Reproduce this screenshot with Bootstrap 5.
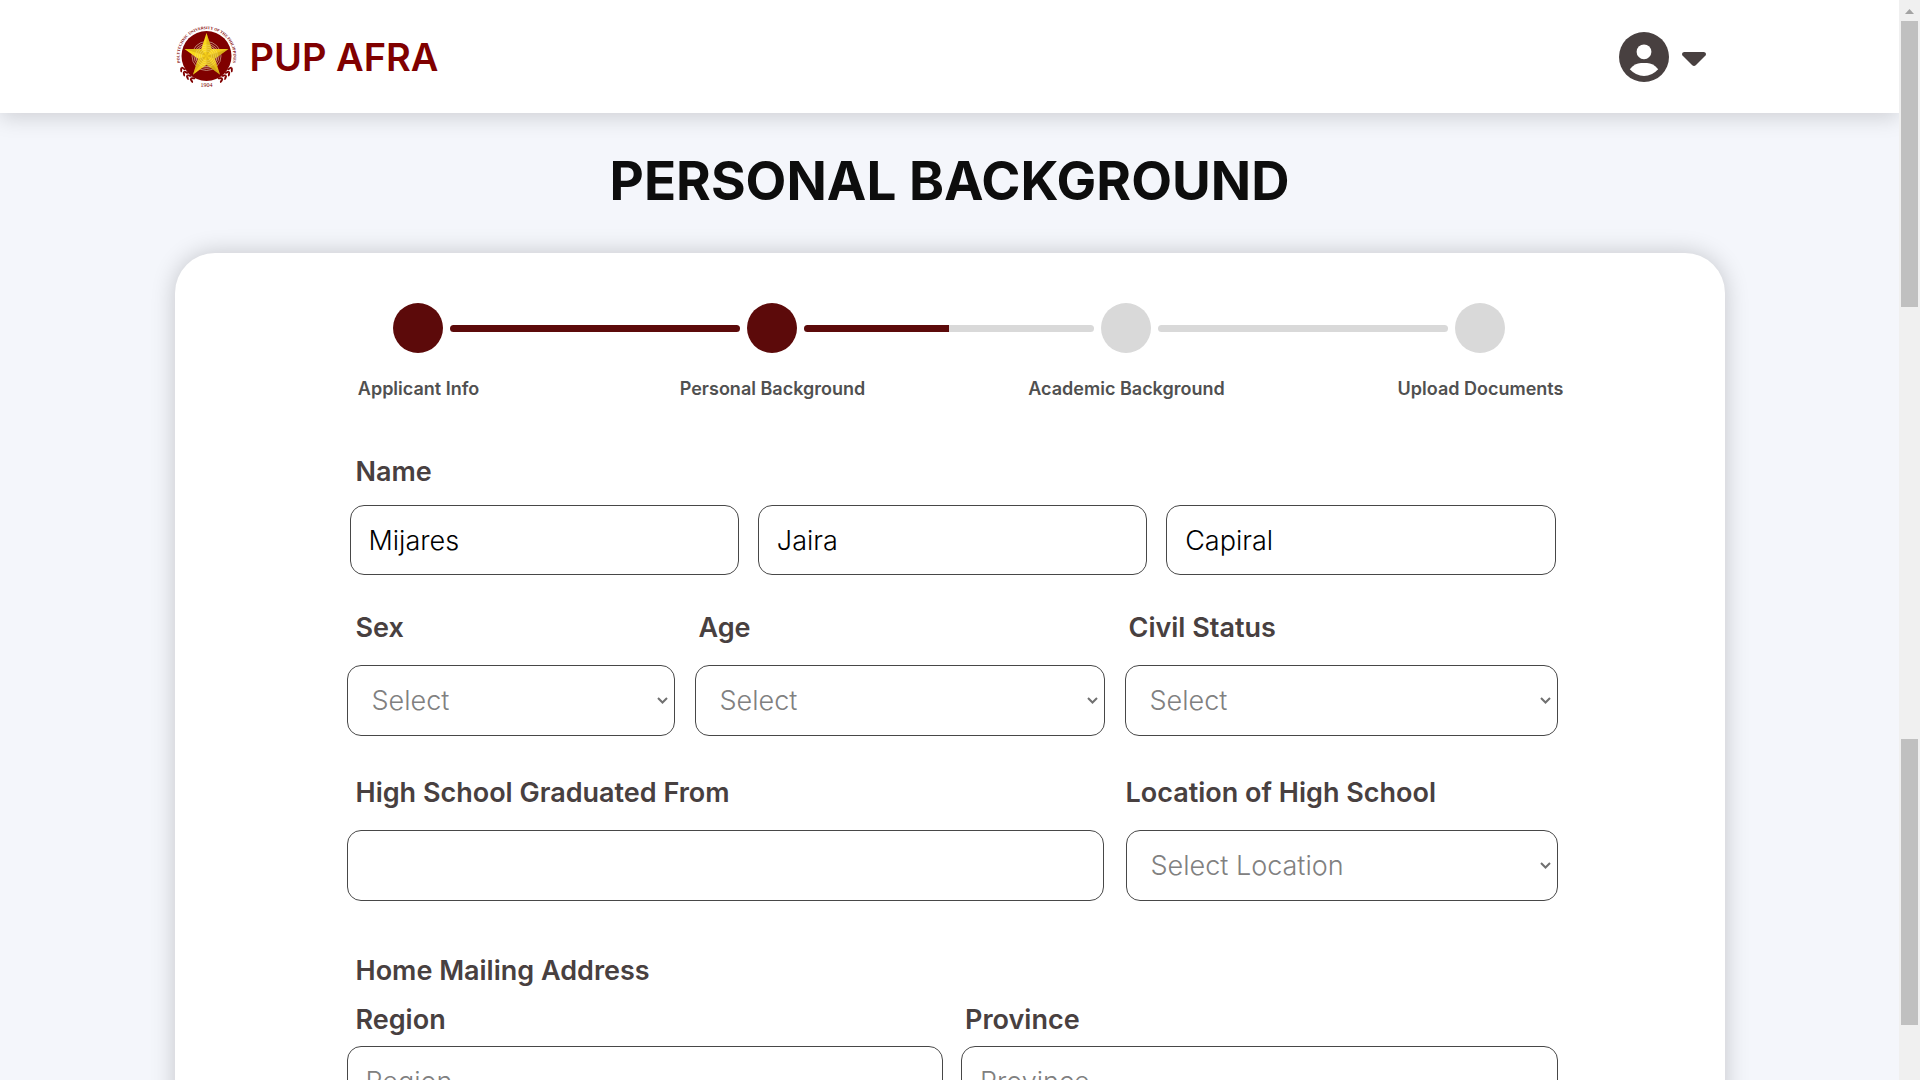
<!DOCTYPE html>
<html lang="en">
<head>
<meta charset="utf-8">
<meta name="viewport" content="width=device-width, initial-scale=1">
<title>PUP AFRA - Personal Background</title>
<link href="https://cdn.jsdelivr.net/npm/bootstrap@5.3.0/dist/css/bootstrap.min.css" rel="stylesheet">
<style>
  :root { --maroon: #5c0a0a; --idle: #d9d9d9; --ink: #484040; --line: #484848; }
  body { font-family: Inter, "Open Sans", sans-serif; background: #f4f6fb; color: var(--ink); }
  .viewport { height: 100vh; overflow: hidden; }
  .page { min-width: 0; overflow: hidden; }
  .wrap { width: 100%; max-width: 1550px; margin: 0 auto; }
  .topbar { height: 113px; background: #fff; box-shadow: 0 5px 20px rgba(0,0,0,.15); }
  .brand { gap: 12px; color: #800000; font-size: 38px; font-weight: 600; line-height: 40px; text-decoration: none; }
  .account { gap: 13px; color: var(--ink); margin-right: 19px; }
  .headline { font-size: 53px; font-weight: 700; line-height: 60px; color: #0d0d0d; margin: 38px 0 42px; }
  .panel { background: #fff; border-radius: 40px 40px 0 0; box-shadow: 0 0 25px rgba(0,0,0,.2); padding: 50px 167px 60px 172px; }
  .steps { gap: 7px; padding: 0 52px 0 46px; }
  .dot { width: 50px; height: 50px; border-radius: 50%; background: var(--idle); flex: none; }
  .bar { height: 7px; border-radius: 4px; background: var(--idle); flex: 1; overflow: hidden; }
  .bar > div { height: 100%; background: var(--maroon); }
  .dot.done { background: var(--maroon); }
  .step-names { display: grid; grid-template-columns: repeat(4, 1fr); font-size: 18px; line-height: 24px; font-weight: 600; color: #505050; margin: 24px -100px 55px -105px; }
  .caption { display: block; font-size: 27px; line-height: 32px; font-weight: 600; color: var(--ink); margin: 0; }
  .box.form-control, .box.form-select { height: 71px; border: 1px solid var(--line); border-radius: 14px; font-size: 27px; line-height: 32px; font-weight: 300; color: #000; background-color: #fff; padding: 0 18px; }
  .box.form-select { padding: 0 24px; color: #808080;
    background-image: url("data:image/svg+xml,%3Csvg xmlns='http://www.w3.org/2000/svg' viewBox='0 0 11 7'%3E%3Cpath d='M1 1l4.500 4.500L10 1' fill='none' stroke='%23707070' stroke-width='2'/%3E%3C/svg%3E");
    background-size: 11px 7px; background-position: right 6px center; }
  .box::placeholder { color: #808080; opacity: 1; }
  .fields { display: grid; }
  .names { grid-template-columns: repeat(3, 1fr); gap: 19px; margin: 17px 2px 0 3px; }
  .names .box.form-control { height: 70px; }
  .traits { grid-template-columns: 328fr 410fr 433fr; gap: 20px; margin-top: 37px; }
  .school { grid-template-columns: 757fr 432fr; gap: 22px; margin-top: 41px; }
  .mailing { margin-top: 54px; }
  .address { grid-template-columns: 1fr 1fr; gap: 18px; margin-top: 17px; }
  .far { padding-left: 9px; }
  .near { padding-left: 4px; }
  .space { margin-bottom: 21px; }
  .tight { margin-bottom: 10px; }
  .scroller { width: 21px; flex: none; background: #f0f0f0; padding: 0 2px; }
  .scroller svg { height: 21px; }
  .thumb { height: 286px; background: #c0c0c0; }
  .thumb + .thumb { margin-top: 432px; }
</style>
<script src="https://cdn.jsdelivr.net/npm/bootstrap@5.3.0/dist/js/bootstrap.bundle.min.js"></script>
</head>
<body>
<div class="viewport d-flex">
  <div class="page flex-grow-1">
    <header class="topbar d-flex">
      <div class="wrap d-flex align-items-center justify-content-between">
        <a href="#" class="brand d-flex align-items-center">
          <svg width="63" height="66" viewBox="-31.500 -32 63 66" aria-hidden="true">
            <defs>
              <path id="ring" d="M-24.400 11.600A27 27 0 1 1 24.400 11.600"/>
              <linearGradient id="gold" x1="0" y1="0" x2="1" y2="1"><stop offset="0" stop-color="#ffe81a"/><stop offset=".55" stop-color="#f6d01c"/><stop offset="1" stop-color="#d3a416"/></linearGradient>
              <g id="leaves"><ellipse cx="0" cy="-1.500" rx="2.600" ry="1" transform="rotate(28)"/><ellipse cx="0" cy="1.500" rx="2.600" ry="1" transform="rotate(-28)"/></g>
              <g id="laurel"><use href="#leaves" transform="rotate(-60) translate(0 27.500)"/><use href="#leaves" transform="rotate(-50) translate(0 27.500)"/><use href="#leaves" transform="rotate(-40) translate(0 27.500)"/><use href="#leaves" transform="rotate(-30) translate(0 27.500)"/></g>
            </defs>
            <circle r="25" fill="#800000"/>
            <g fill="none" stroke="#d9b7a0" stroke-width=".7"><circle r="14.500"/><circle r="12.500"/><circle r="10.500"/><circle r="8.500"/></g>
            <path fill="url(#gold)" d="M0-23L5.200-7.100 22-7.100 8.400 2.800 13.600 18.700 0 8.800-13.600 18.700-8.400 2.800-22-7.100-5.200-7.100Z"/>
            <path fill="#a97c12" opacity=".3" d="M0 0L0-23 5.200-7.100ZM0 0L22-7.100 8.400 2.800ZM0 0L13.600 18.700 0 8.800ZM0 0L-13.600 18.700-8.400 2.800ZM0 0L-22-7.100-5.200-7.100Z"/>
            <g fill="none" stroke="#fff3a0" stroke-width=".5" opacity=".7"><circle r="11"/><circle r="9"/><circle r="7"/><circle r="5"/></g>
            <text font-family="Liberation Serif, serif" font-size="4" font-weight="700" fill="#800000"><textPath href="#ring" startOffset="50%" text-anchor="middle">POLYTECHNIC UNIVERSITY OF THE PHILIPPINES</textPath></text>
            <g fill="#800000"><use href="#laurel"/><use href="#laurel" transform="scale(-1 1)"/></g>
            <text y="31" text-anchor="middle" font-family="Liberation Serif, serif" font-size="6" font-weight="400" fill="#800000">1904</text>
          </svg>
          <span>PUP AFRA</span>
        </a>
        <button type="button" class="account btn border-0 p-0 d-flex align-items-center" aria-label="Account menu">
          <svg width="50" height="50" viewBox="0 0 50 50" aria-hidden="true"><circle cx="25" cy="25" r="25" fill="currentColor"/><circle cx="25" cy="19.800" r="7.400" fill="#fff"/><path fill="#fff" d="M10.800 37.300Q16 31 22 31H28Q34 31 39.200 37.300Q33 44 25 44T10.800 37.300Z"/></svg>
          <svg width="24" height="14" viewBox="0 0 24 14" class="mt-1" aria-hidden="true"><path fill="currentColor" d="M2 0H22Q25 1 23.500 3.500L14 13Q12 15 10 13L.5 3.500Q-1 1 2 0Z"/></svg>
        </button>
      </div>
    </header>

    <main class="wrap">
      <h1 class="headline text-center">PERSONAL BACKGROUND</h1>
      <form class="panel">
        <div class="steps d-flex align-items-center" aria-hidden="true">
          <div class="dot done"></div>
          <div class="bar"><div style="width:100%"></div></div>
          <div class="dot done"></div>
          <div class="bar"><div style="width:50%"></div></div>
          <div class="dot"></div>
          <div class="bar"></div>
          <div class="dot"></div>
        </div>
        <div class="step-names text-center">
          <span>Applicant Info</span><span>Personal Background</span><span>Academic Background</span><span>Upload Documents</span>
        </div>

        <label class="caption far" for="lastName">Name</label>
        <div class="fields names">
          <input id="lastName" class="box form-control" type="text" value="Mijares">
          <input class="box form-control" type="text" value="Jaira" aria-label="First name">
          <input class="box form-control" type="text" value="Capiral" aria-label="Middle name">
        </div>

        <div class="fields traits">
          <div><label class="caption far space" for="sex">Sex</label><select id="sex" class="box form-select"><option>Select</option></select></div>
          <div><label class="caption near space" for="age">Age</label><select id="age" class="box form-select"><option>Select</option></select></div>
          <div><label class="caption near space" for="civil">Civil Status</label><select id="civil" class="box form-select"><option>Select</option></select></div>
        </div>

        <div class="fields school">
          <div><label class="caption far space" for="school">High School Graduated From</label><input id="school" class="box form-control" type="text"></div>
          <div><label class="caption space" for="place">Location of High School</label><select id="place" class="box form-select"><option>Select Location</option></select></div>
        </div>

        <h2 class="caption far mailing">Home Mailing Address</h2>
        <div class="fields address">
          <div><label class="caption far tight" for="region">Region</label><input id="region" class="box form-control" type="text" placeholder="Region"></div>
          <div><label class="caption near tight" for="province">Province</label><input id="province" class="box form-control" type="text" placeholder="Province"></div>
        </div>
      </form>
    </main>
  </div>
  <div class="scroller d-flex flex-column" aria-hidden="true">
    <svg viewBox="0 0 17 21"><path fill="#a3a3a3" d="M4 14L8.500 9L13 14Z"/></svg>
    <div class="thumb"></div>
    <div class="thumb"></div>
  </div>
</div>
</body>
</html>
